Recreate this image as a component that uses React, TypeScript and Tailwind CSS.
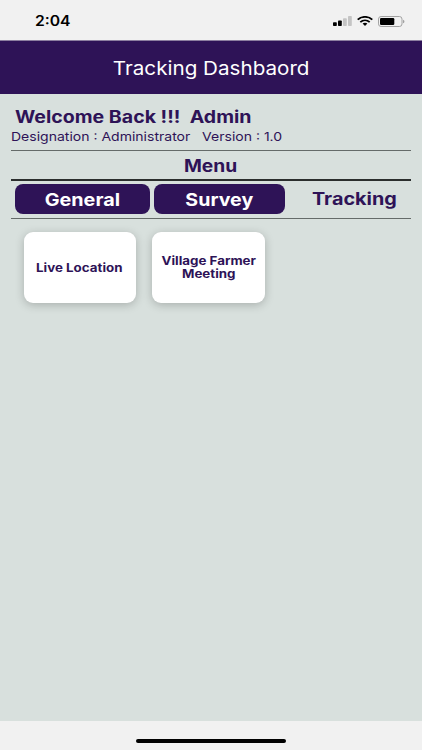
import React from 'react';

const StatusBar: React.FC = () => (
  <div className="flex h-[40px] shrink-0 items-center justify-between bg-[#f1f1f1] pl-[35px] pr-[17px] pt-[2px]">
    <span className="origin-left scale-x-[1.12] text-[14px] leading-none font-semibold text-black">2:04</span>
    <div className="flex items-center gap-[5px]">
      <svg width="19" height="10" viewBox="0 0 19 10">
        <rect x="0" y="6.2" width="3.8" height="3.8" rx="0.8" fill="#000" />
        <rect x="5" y="4.4" width="3.8" height="5.6" rx="0.8" fill="#000" />
        <rect x="10" y="2.2" width="3.8" height="7.8" rx="0.8" fill="#c4c4c4" />
        <rect x="15" y="0" width="3.8" height="10" rx="0.8" fill="#c4c4c4" />
      </svg>
      <svg width="16" height="10" viewBox="0 0 16 10" fill="none" stroke="#000" strokeWidth="1.9">
        <path d="M0.7 3.6C4.7 0 11.3 0 15.3 3.6" />
        <path d="M3.3 6.1C6 3.8 10 3.8 12.7 6.1" />
        <path d="M5.6 7.6C7 6.5 9 6.5 10.4 7.6L8 9.9Z" fill="#000" stroke="none" />
      </svg>
      <svg width="27" height="11" viewBox="0 0 27 11">
        <rect x="0.5" y="0.5" width="23.5" height="10" rx="2.6" fill="none" stroke="#a2a2a2" />
        <rect x="2" y="2" width="14.3" height="7" rx="1.2" fill="#000" />
        <path d="M25.2 3.7C26.8 4.2 26.8 6.8 25.2 7.3Z" fill="#8f8f8f" />
      </svg>
    </div>
  </div>
);

const MenuCard: React.FC<{ children: React.ReactNode }> = ({ children }) => (
  <div className="flex h-[71px] w-[112.5px] items-center justify-center rounded-[9px] bg-white pt-px text-center text-[11.5px] leading-[13px] font-bold whitespace-nowrap shadow-[0_2px_10px_rgba(0,0,0,0.22)]">
    <span className="scale-x-[1.16]">{children}</span>
  </div>
);

const App: React.FC = () => {
  return (
    <div className="flex h-[750px] w-[422px] flex-col overflow-hidden bg-[#d8e0dd] font-[Inter,'Liberation_Sans',sans-serif] text-[#2e1357]">
      <StatusBar />

      <header className="flex h-[54px] shrink-0 items-center justify-center border-t border-[#8c7fa0] bg-[#2e1357] pt-px text-white">
        <h1 className="scale-x-[1.115] text-[18.5px] leading-none">Tracking Dashbaord</h1>
      </header>

      <main className="flex flex-1 flex-col px-[11px] pt-[12px]">
        <div className="flex h-[20px] items-center pt-[3px] pl-[4px]">
          <span className="origin-left scale-x-[1.15] text-[17px] leading-none font-bold whitespace-pre">{'Welcome Back !!!  Admin'}</span>
        </div>
        <div className="flex h-[20px] items-center pt-[2px]">
          <span className="origin-left scale-x-[1.15] text-[12.2px] leading-[18px] whitespace-pre">{'Designation : Administrator   Version : 1.0'}</span>
        </div>

        <div className="mt-[4px] h-px bg-[#656b69]" />
        <div className="flex h-[28px] items-center justify-center pt-[2px]">
          <h2 className="scale-x-[1.13] text-[17px] leading-none font-bold">Menu</h2>
        </div>
        <div className="h-[2px] bg-[#2b2e2d]" />

        <div className="flex h-[37px] items-start gap-[4px] pt-[3px] pl-[3.5px] text-[17.5px] font-bold">
          <button className="flex h-[30px] w-[135px] items-center justify-center rounded-[8px] bg-[#2e1357] pt-[2px] text-white">
            <span className="scale-x-[1.13]">General</span>
          </button>
          <button className="flex h-[30px] w-[131px] items-center justify-center rounded-[8px] bg-[#2e1357] pt-[2px] text-white">
            <span className="scale-x-[1.12]">Survey</span>
          </button>
          <button className="flex h-[30px] flex-1 items-center justify-center pt-[2px] pl-[9px]">
            <span className="scale-x-[1.165] text-[17px]">Tracking</span>
          </button>
        </div>
        <div className="h-px bg-[#656b69]" />

        <div className="mt-[13px] flex gap-[16px] pl-[12.5px]">
          <MenuCard>Live Location</MenuCard>
          <MenuCard>
            Village Farmer
            <br />
            Meeting
          </MenuCard>
        </div>
      </main>

      <footer className="flex h-[29px] shrink-0 justify-center bg-[#f1f1f1] pt-[18px]">
        <div className="h-[4px] w-[150px] rounded-full bg-black" />
      </footer>
    </div>
  );
};

export default App;
